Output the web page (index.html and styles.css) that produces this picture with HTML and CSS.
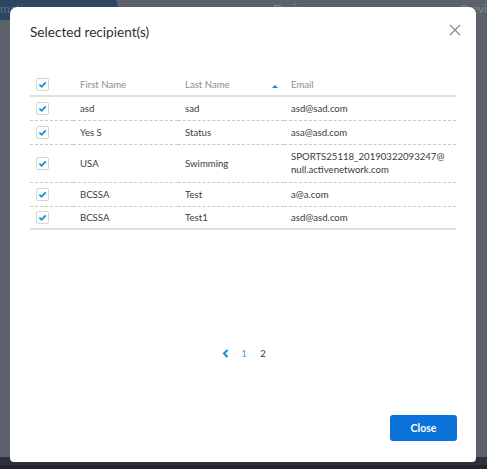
FILE: index.html
```html
<!DOCTYPE html>
<html>
<head>
<meta charset="utf-8">
<link rel="stylesheet" href="styles.css">
</head>
<body>
<div class="backdrop">
  <div class="topbar">
    <div class="tab tab-active">mation</div>
    <div class="tab tab-mid">Design</div>
    <div class="tab tab-right">Previ</div>
  </div>
  <div class="bottombar"></div>
</div>

<div class="modal">
  <div class="modal-head">
    <h2 class="title">Selected recipient(s)</h2>
    <button class="close-x" aria-label="Close">
      <svg width="12" height="12" viewBox="0 0 12 12"><path d="M1 1 L11 11 M11 1 L1 11" stroke="#8a8a8a" stroke-width="1.3" fill="none"/></svg>
    </button>
  </div>

  <table class="grid">
    <thead>
      <tr>
        <th class="c-check"><span class="cb"><svg viewBox="0 0 12 12" width="12" height="12"><path d="M2.6 6.2 L5 8.4 L9.6 3.6" stroke="#1b8ed8" stroke-width="2" fill="none"/></svg></span></th>
        <th class="c-first">First Name</th>
        <th class="c-last"><div class="sortcell"><span>Last Name</span><span class="sort"></span></div></th>
        <th class="c-email">Email</th>
      </tr>
    </thead>
    <tbody>
      <tr>
        <td class="c-check"><span class="cb"><svg viewBox="0 0 12 12" width="12" height="12"><path d="M2.6 6.2 L5 8.4 L9.6 3.6" stroke="#1b8ed8" stroke-width="2" fill="none"/></svg></span></td>
        <td>asd</td><td>sad</td><td>asd@sad.com</td>
      </tr>
      <tr>
        <td class="c-check"><span class="cb"><svg viewBox="0 0 12 12" width="12" height="12"><path d="M2.6 6.2 L5 8.4 L9.6 3.6" stroke="#1b8ed8" stroke-width="2" fill="none"/></svg></span></td>
        <td>Yes S</td><td>Status</td><td>asa@asd.com</td>
      </tr>
      <tr class="tall">
        <td class="c-check"><span class="cb"><svg viewBox="0 0 12 12" width="12" height="12"><path d="M2.6 6.2 L5 8.4 L9.6 3.6" stroke="#1b8ed8" stroke-width="2" fill="none"/></svg></span></td>
        <td>USA</td><td>Swimming</td><td class="wrap">SPORTS25118_20190322093247@<br>null.activenetwork.com</td>
      </tr>
      <tr>
        <td class="c-check"><span class="cb"><svg viewBox="0 0 12 12" width="12" height="12"><path d="M2.6 6.2 L5 8.4 L9.6 3.6" stroke="#1b8ed8" stroke-width="2" fill="none"/></svg></span></td>
        <td>BCSSA</td><td>Test</td><td>a@a.com</td>
      </tr>
      <tr>
        <td class="c-check"><span class="cb"><svg viewBox="0 0 12 12" width="12" height="12"><path d="M2.6 6.2 L5 8.4 L9.6 3.6" stroke="#1b8ed8" stroke-width="2" fill="none"/></svg></span></td>
        <td>BCSSA</td><td>Test1</td><td>asd@asd.com</td>
      </tr>
    </tbody>
  </table>

  <nav class="pager">
    <span class="pg prev"><svg width="7" height="9" viewBox="0 0 7 9"><path d="M5.5 1 L2 4.5 L5.5 8" stroke="#1488d8" stroke-width="2" fill="none"/></svg></span>
    <span class="pg num link">1</span>
    <span class="pg num current">2</span>
  </nav>

  <div class="foot">
    <button class="btn-close">Close</button>
  </div>
</div>
</body>
</html>
```

FILE: styles.css
```css
* { box-sizing: border-box; }
html, body { margin: 0; padding: 0; }
body {
  width: 487px;
  height: 469px;
  overflow: hidden;
  position: relative;
  background: #5c616b;
  font-family: Lato, "Open Sans", sans-serif;
}
.backdrop {
  height: 469px;
  display: flex;
  flex-direction: column;
  justify-content: space-between;
}
.topbar {
  height: 20px;
  display: flex;
  background: #5c616b;
  font-size: 12px;
  color: #7f8691;
}
.tab { line-height: 18px; }
.tab-active {
  width: 122px;
  background: #2c4664;
  clip-path: polygon(0 0, 116px 0, 122px 100%, 0 100%);
  color: #5b7290;
}
.tab-mid { flex: 1; text-align: center; padding-left: 12px; }
.tab-right { width: 38px; text-align: right; }
.bottombar {
  height: 12px;
  background: linear-gradient(#2d313a 0 8px, #22252c 8px);
}

.modal {
  position: absolute;
  left: 10px;
  top: 7px;
  width: 466px;
  height: 455px;
  background: #fff;
  border-radius: 7px 7px 4px 4px;
  padding: 16px 20px 21px 20px;
  display: flex;
  flex-direction: column;
}
.modal-head {
  display: flex;
  justify-content: space-between;
  align-items: flex-start;
  height: 51px;
}
.title {
  margin: 0;
  font-size: 13.6px;
  font-weight: 400;
  color: #2f2f2f;
  line-height: 18px;
}
.close-x {
  border: 0;
  background: none;
  padding: 0;
  margin: 1px -5px 0 0;
  width: 12px;
  height: 12px;
  display: block;
}
.close-x svg { display: block; }

.grid {
  width: 426px;
  border-collapse: collapse;
  table-layout: fixed;
  font-size: 9.6px;
  color: #3b3b3b;
}
.grid th {
  font-weight: 400;
  color: #8b8b8b;
  text-align: left;
  height: 22px;
  padding: 0 0 0 7px;
  border-bottom: 2px solid #e0e0e0;
}
.grid td {
  height: 24px;
  padding: 0 0 0 7px;
  border-bottom: 1px dashed #c9c9c9;
  vertical-align: middle;
}
.grid tbody tr:last-child td { border-bottom: 2px solid #e0e0e0; height: 23px; }
.grid tr.tall td { height: 38px; }
.grid td.wrap { line-height: 13px; padding-top: 0; }
.grid .c-check { width: 43px; padding-left: 6px; }
.grid .c-first { width: 105px; }
.grid .c-last { width: 106px; padding-right: 6px; }
.sortcell { display: flex; justify-content: space-between; align-items: center; }
.sort {
  width: 0; height: 0;
  border-left: 3px solid transparent;
  border-right: 3px solid transparent;
  border-bottom: 3px solid #1488d8;
  margin-top: 3px;
}
.cb {
  display: block;
  width: 13px;
  height: 13px;
  border: 1px solid #d5d5d5;
  border-radius: 2px;
  background: #fff;
}
.cb svg { display: block; width: 11px; height: 11px; }

.pager {
  margin-top: 116px;
  display: flex;
  justify-content: center;
  align-items: center;
  font-size: 9.6px;
  padding-left: 2px;
}
.pg {
  width: 19px;
  text-align: center;
  display: flex;
  justify-content: center;
  align-items: center;
  height: 14px;
}
.link { color: #4aa3e6; }
.current { color: #333; }

.foot {
  margin-top: auto;
  display: flex;
  justify-content: flex-end;
  margin-right: -1px;
}
.btn-close {
  width: 67px;
  height: 26px;
  border: 0;
  border-radius: 3px;
  background: #0b72d9;
  color: #fff;
  font-family: Lato, "Open Sans", sans-serif;
  font-weight: 700;
  font-size: 10.5px;
  padding: 0;
}
```
